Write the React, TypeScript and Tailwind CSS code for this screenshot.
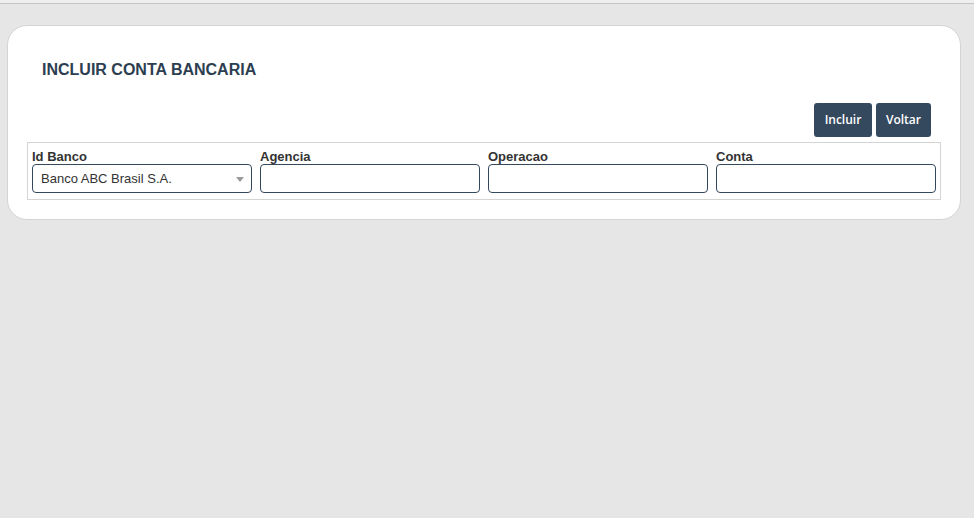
import React from "react";

const fields = ["Agencia", "Operacao", "Conta"];

export default function App() {
  return (
    <div className="min-h-[518px] w-full bg-[#e6e6e6] font-['Liberation_Sans',Arial,sans-serif]">
      <div className="h-[3px] bg-[#efefef]" />
      <div className="h-px bg-[#c4c4c4]" />
      <div className="ml-[7px] mr-[13px] mt-[21px] rounded-[20px] border border-[#d4d4d4] bg-white px-[19px] pb-[19px] pt-[34px]">
        <h1 className="pl-[15px] text-[16px] font-bold leading-[20px] text-[#2c3e50]">
          INCLUIR CONTA BANCARIA
        </h1>
        <div className="mt-[23px] flex justify-end gap-[4px] pr-[10px]">
          <button
            type="button"
            className="h-[34px] w-[58px] rounded-[3px] bg-[#34495e] font-['Open_Sans',sans-serif] text-[12px] font-semibold text-white"
          >
            Incluir
          </button>
          <button
            type="button"
            className="h-[34px] w-[55px] rounded-[3px] bg-[#34495e] font-['Open_Sans',sans-serif] text-[12px] font-semibold text-white"
          >
            Voltar
          </button>
        </div>
        <div className="mt-[5px] flex gap-[8px] border border-[#d4d4d4] px-[4px] pb-[6px] pt-[6px]">
          <div className="flex w-[220px] flex-col">
            <label className="text-[13px] font-bold leading-[16px] text-[#333]">Id Banco</label>
            <div className="relative mt-[-1px] flex h-[29px] items-center rounded-[4px] border border-[#34495e] pl-[8px] text-[13px] text-[#333]">
              Banco ABC Brasil S.A.
              <span className="absolute right-[7px] top-[12px] h-0 w-0 border-x-[4px] border-t-[5px] border-x-transparent border-t-[#999]" />
            </div>
          </div>
          {fields.map((f) => (
            <div key={f} className="flex w-[220px] flex-col">
              <label className="text-[13px] font-bold leading-[16px] text-[#333]">{f}</label>
              <input
                className="mt-[-1px] h-[29px] rounded-[4px] border border-[#34495e] bg-white px-2 text-[13px] outline-none"
              />
            </div>
          ))}
        </div>
      </div>
    </div>
  );
}
